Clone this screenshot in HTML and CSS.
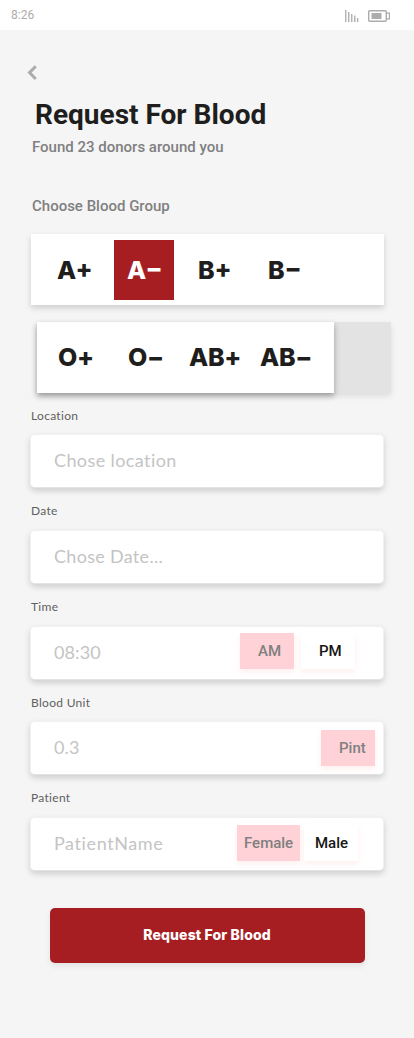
FILE: index.html
```html
<!DOCTYPE html>
<html lang="en">
<head>
<meta charset="utf-8">
<title>Request For Blood</title>
<link rel="stylesheet" href="styles.css">
</head>
<body>
<header class="status">
  <span class="clock">8:26</span>
  <svg class="status-icons" width="46" height="14" viewBox="0 0 46 14" fill="none">
    <path d="M.7 1v12M3.7 3v10M6.7 5v8M9.7 6.5V13M12.6 9v4" stroke="#b3b3b3" stroke-width="1.5"/>
    <rect x="23.7" y="1.7" width="17.6" height="10.6" rx="1" stroke="#acacac" stroke-width="1.4"/>
    <rect x="26.5" y="4" width="10" height="6" fill="#acacac"/>
    <path d="M42 4.2h2.4v5.6H42" stroke="#acacac" stroke-width="1.2"/>
  </svg>
</header>
<main class="screen">
  <svg class="back" width="10" height="16" viewBox="0 0 10 16" fill="none"><path d="M8.8 1.2 2.5 7.6l6.3 6.4" stroke="#acacac" stroke-width="3"/></svg>
  <h1 class="title">Request For Blood</h1>
  <p class="subtitle">Found 23 donors around you</p>
  <h2 class="section">Choose Blood Group</h2>
  <div class="groups">
    <span class="group a-pos">A+</span><span class="group picked">A−</span><span class="group b-pos">B+</span><span class="group b-neg">B−</span>
  </div>
  <div class="tray">
    <div class="groups second">
      <span class="group o-pos">O+</span><span class="group o-neg">O−</span><span class="group ab-pos">AB+</span><span class="group ab-neg">AB−</span>
    </div>
  </div>
  <form class="form">
    <div class="row"><span class="label">Location</span><div class="field"><span class="value">Chose location</span></div></div>
    <div class="row"><span class="label">Date</span><div class="field"><span class="value v-date">Chose Date...</span></div></div>
    <div class="row"><span class="label">Time</span><div class="field time"><span class="value v-time">08:30</span><span class="chip on">AM</span><span class="chip pm">PM</span></div></div>
    <div class="row"><span class="label">Blood Unit</span><div class="field unit"><span class="value v-time">0.3</span><span class="chip on pint">Pint</span></div></div>
    <div class="row"><span class="label">Patient</span><div class="field patient"><span class="value v-patient">PatientName</span><span class="chip on female">Female</span><span class="chip male">Male</span></div></div>
  </form>
  <button class="submit" type="button"><span>Request For Blood</span></button>
</main>
</body>
</html>
```
FILE: styles.css
```css
* { box-sizing: border-box; }
body { margin: 0; width: 414px; height: 1038px; background: #f5f5f5; font-family: Roboto, sans-serif; overflow: hidden; }
.status { display: flex; justify-content: space-between; align-items: flex-start; height: 30px; padding: 8px 23px 0 11px; background: #fff; }
.clock { font-size: 12px; line-height: 14px; color: #acacac; }
.status-icons { margin-top: 1px; }
.screen { display: flex; flex-direction: column; align-items: flex-start; }
.back { margin: 35px 0 0 27px; }
.title { margin: 17px 0 0 35px; font-size: 28px; line-height: 34px; font-weight: 700; color: #201d1d; white-space: nowrap; }
.subtitle { margin: 6px 0 0 32px; font-size: 15px; line-height: 18px; font-weight: 500; color: #808080; white-space: nowrap; }
.section { margin: 41px 0 0 32px; font-size: 15px; line-height: 18px; font-weight: 500; color: #808080; white-space: nowrap; }
.groups { display: flex; align-items: center; width: 353px; height: 71px; margin: 19px 0 0 31px; background: #fff; box-shadow: 0 3px 6px rgba(0,0,0,.16); }
.group { flex: none; font-family: Inter, sans-serif; font-size: 25px; line-height: 30px; font-weight: 800; color: #201d1d; white-space: nowrap; }
.a-pos { width: 83px; padding-left: 26px; }
.picked { width: 60px; height: 60px; padding: 15px 0 0 13px; background: #a61e22; color: #fff; }
.b-pos { width: 70px; margin-left: 24px; }
.tray { width: 354px; height: 71px; margin: 17px 0 0 37px; background: #e3e3e3; box-shadow: 0 3px 6px rgba(0,0,0,.1); }
.second { width: 297px; margin: 0; padding-bottom: 2px; box-shadow: 0 3px 6px rgba(0,0,0,.32); }
.second .group { letter-spacing: -.3px; }
.o-pos { width: 91px; padding-left: 21px; }
.o-neg { width: 61px; }
.ab-pos { width: 71px; }
.form { display: flex; flex-direction: column; width: 354px; margin: 0 0 0 30px; }
.row { height: 95.67px; padding-top: 13.6px; }
.label { display: block; width: max-content; height: 27.6px; padding-left: 1px; font-family: Lato, sans-serif; font-size: 12px; line-height: 18px; letter-spacing: .3px; color: #5f5f5f; }
.field { display: flex; align-items: center; height: 54px; padding-left: 23px; border-radius: 5px; border: 1px solid #f1f1f1; border-bottom-color: #e3e3e3; background: #fff; box-shadow: 0 3px 6px rgba(0,0,0,.16); }
.value { flex: 1; margin-top: -2px; font-family: Lato, sans-serif; font-size: 18px; line-height: 24px; letter-spacing: .4px; color: #c4c4c4; white-space: nowrap; }
.v-date { letter-spacing: .3px; }
.v-time { letter-spacing: .1px; }
.v-patient { letter-spacing: .6px; }
.chip { flex: none; width: 54px; height: 36px; margin-top: -3px; padding-left: 18px; font-size: 15px; line-height: 36px; font-weight: 500; color: #161616; background: #fff; box-shadow: 0 3px 6px rgba(255,100,100,.1); white-space: nowrap; }
.on { background: #fed2d7; color: #808080; }
.time { padding-right: 28px; }
.pm { margin-left: 7px; }
.unit { padding-right: 8px; }
.pint { margin-top: -1px; }
.patient { padding-right: 25px; }
.patient .chip { margin-top: -2px; }
.female { width: 63px; padding-left: 7px; }
.male { margin-left: 4px; padding-left: 11px; }
.submit { width: 315px; height: 55px; margin: 36.5px 0 0 49.5px; padding: 0; border: 0; border-radius: 5px; background: #a61e22; box-shadow: 0 3px 6px rgba(0,0,0,.08); color: #fff; font: 800 14px/20px Inter, sans-serif; letter-spacing: .15px; }
```
